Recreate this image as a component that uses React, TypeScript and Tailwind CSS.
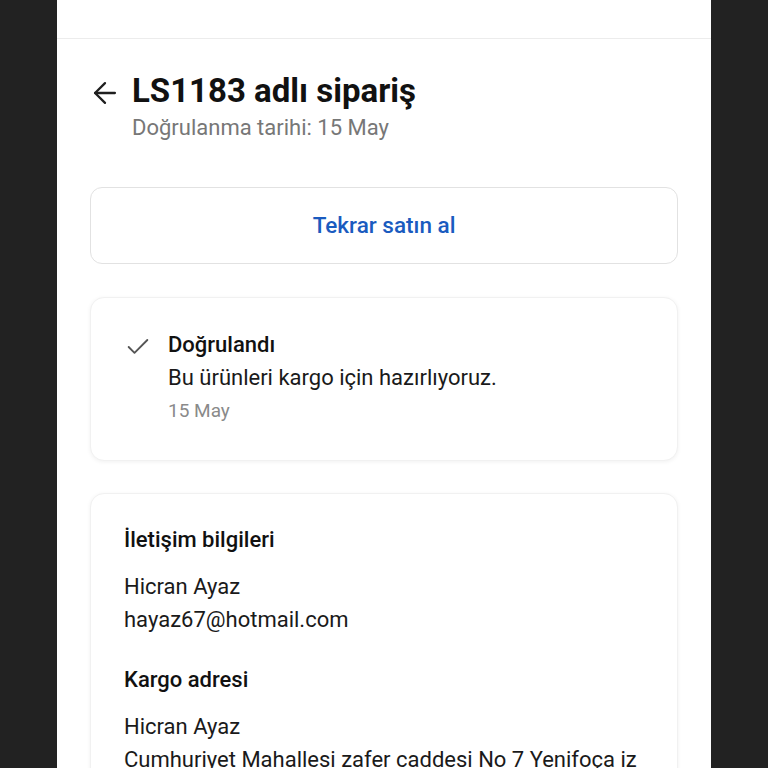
import { ArrowLeft, Check } from 'lucide-react';

export default function App() {
  return (
    <div className="h-[768px] w-[768px] overflow-hidden bg-[#222222]" style={{ fontFamily: 'Roboto, "Noto Sans", sans-serif' }}>
      <div className="ml-[57px] h-full w-[654px] bg-white">
        <div className="h-[39px] border-b border-[#ececec]" />
        <div className="px-[33px]">
          <div className="flex items-start pt-[33px]">
            <ArrowLeft className="ml-[-2px] mt-[4px] h-[34px] w-[34px] text-[#1f1f1f]" strokeWidth={1.6} />
            <div className="ml-[10px]">
              <h1 className="text-[33px] font-bold leading-[38px] text-[#111]">LS1183 adlı sipariş</h1>
              <p className="mt-[6px] text-[22px] leading-[24px] text-[#777]">Doğrulanma tarihi: 15 May</p>
            </div>
          </div>

          <button className="mt-[47px] flex h-[77px] w-full items-center justify-center rounded-[12px] border border-[#e2e2e2] bg-white text-[22.5px] font-medium text-[#1a5bbf]">
            Tekrar satın al
          </button>

          <div className="mt-[33px] flex h-[164px] rounded-[14px] border border-[#f1f1f1] bg-white pl-[33px] pt-[34px] shadow-[0_1px_4px_rgba(0,0,0,0.06)]">
            <Check className="mt-[1px] h-[28px] w-[28px] text-[#555]" strokeWidth={1.6} />
            <div className="ml-[16px]">
              <div className="text-[22px] font-medium leading-[26px] text-[#111]">Doğrulandı</div>
              <div className="mt-[7px] text-[22px] leading-[26px] text-[#1a1a1a]">Bu ürünleri kargo için hazırlıyoruz.</div>
              <div className="mt-[9px] text-[19px] leading-[22px] text-[#8a8a8a]">15 May</div>
            </div>
          </div>

          <div className="mt-[32px] rounded-[14px] border border-[#f1f1f1] bg-white px-[33px] pt-[32px] pb-[30px] shadow-[0_1px_4px_rgba(0,0,0,0.06)]">
            <div className="text-[22px] font-medium leading-[28px] text-[#111]">İletişim bilgileri</div>
            <div className="mt-[16px] text-[22px] leading-[33px] text-[#1a1a1a]">
              <div>Hicran Ayaz</div>
              <div>hayaz67@hotmail.com</div>
            </div>
            <div className="mt-[30px] text-[22px] font-medium leading-[28px] text-[#111]">Kargo adresi</div>
            <div className="mt-[16px] text-[22px] leading-[33px] text-[#1a1a1a]">
              <div>Hicran Ayaz</div>
              <div className="whitespace-nowrap">Cumhuriyet Mahallesi zafer caddesi No 7 Yenifoça iz</div>
            </div>
          </div>
        </div>
      </div>
    </div>
  );
}
